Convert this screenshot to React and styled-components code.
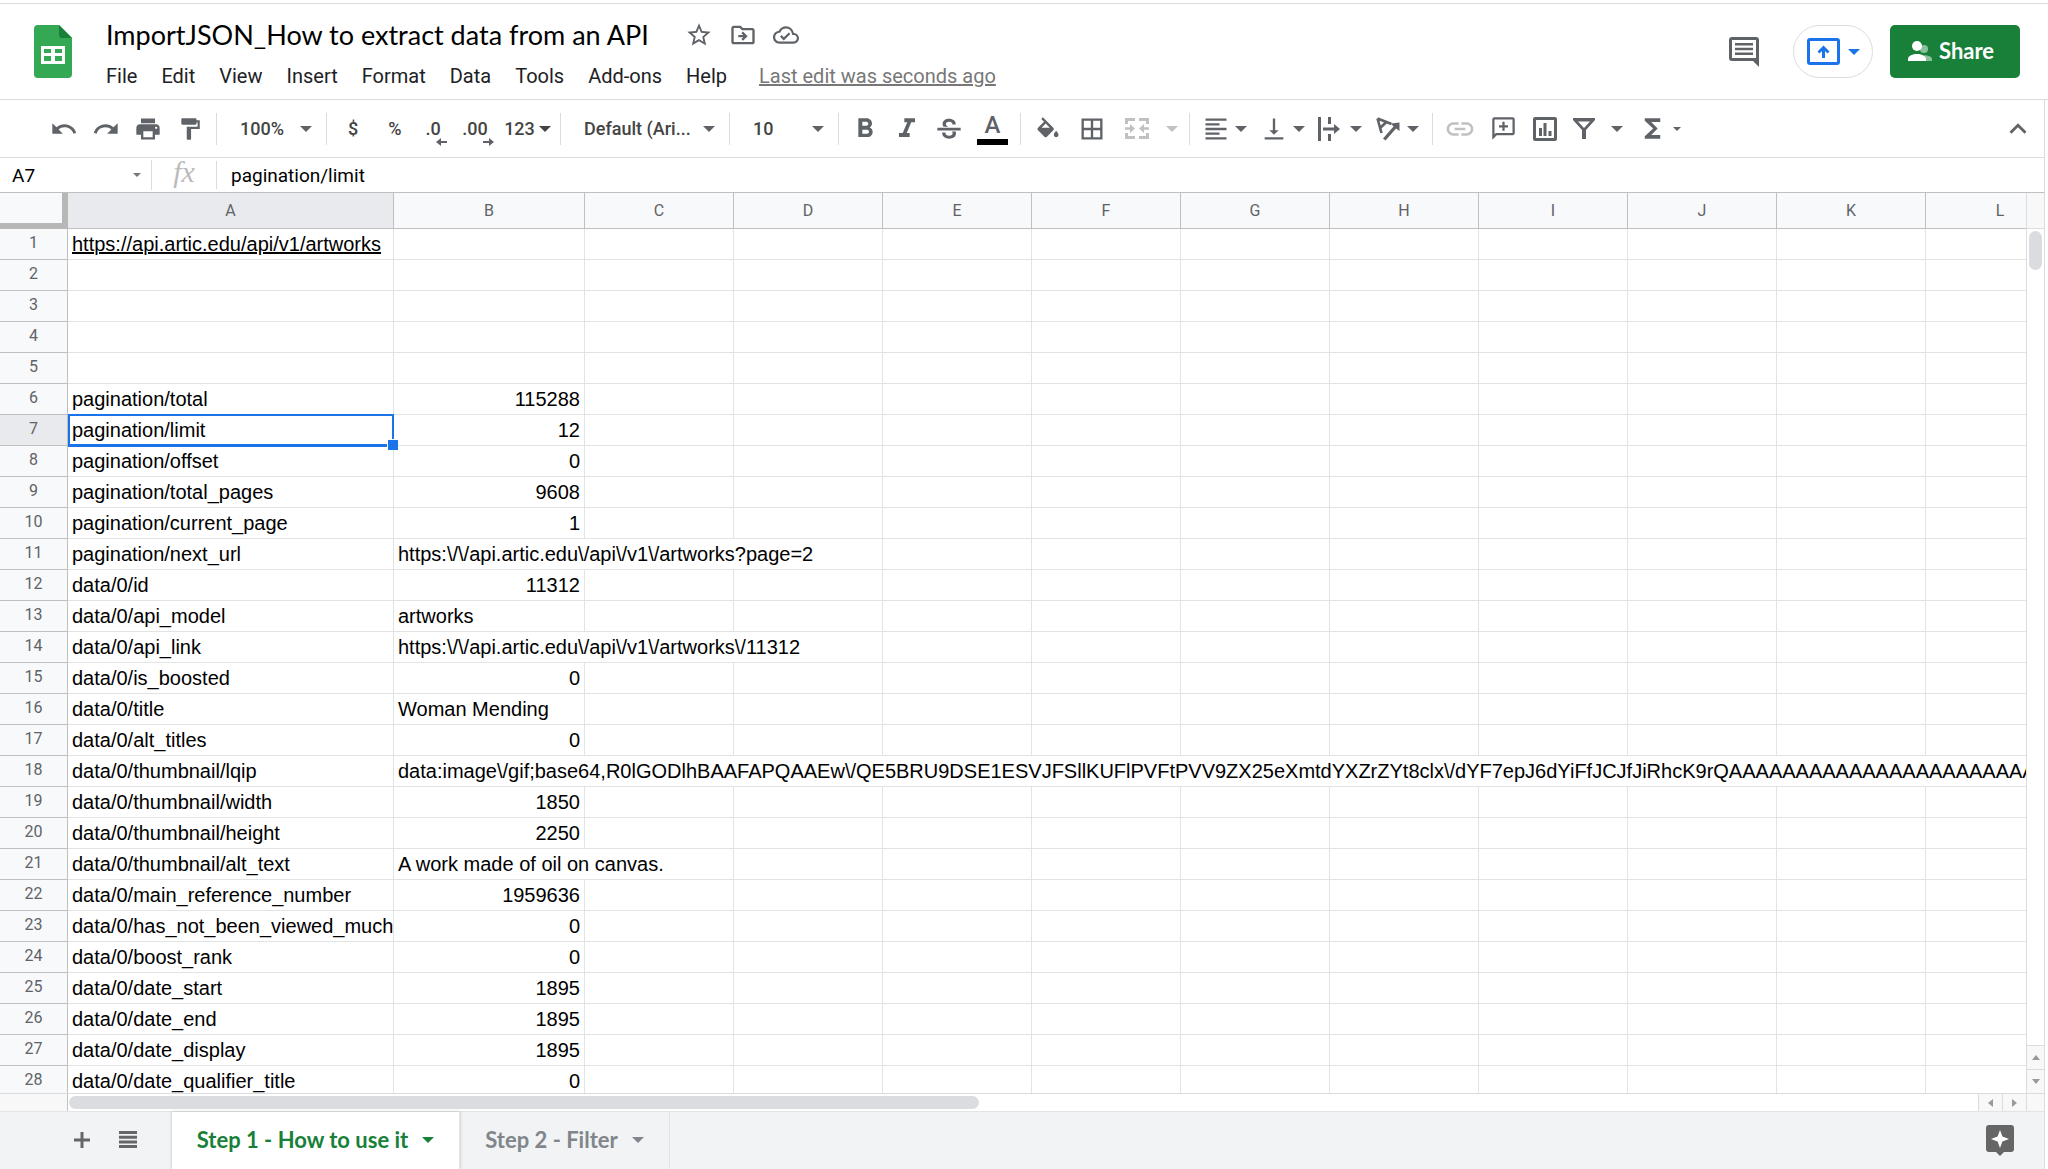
import React from 'react';
import styled, { createGlobalStyle, css } from 'styled-components';
import {
  MdUndo,
  MdRedo,
  MdPrint,
  MdFormatPaint,
  MdFormatBold,
  MdFormatItalic,
  MdBorderAll,
  MdFormatAlignLeft,
  MdVerticalAlignBottom,
  MdInsertLink,
  MdFunctions,
  MdStarBorder,
  MdOutlineDriveFileMove,
  MdOutlineCloudDone,
  MdKeyboardArrowUp,
} from 'react-icons/md';

const grey = '#5f6368';
const green = '#188038';
const blue = '#1a73e8';
const uiFont = "Roboto, 'Liberation Sans', sans-serif";

const GlobalStyle = createGlobalStyle`
  * {
    box-sizing: border-box;
  }
  body {
    margin: 0;
    background: #fff;
    font-family: ${uiFont};
    color: #202124;
  }
  button, input, select {
    font: inherit;
    color: inherit;
    margin: 0;
    padding: 0;
    border: 0;
    background: none;
  }
  svg {
    display: block;
    flex: none;
  }
`;

const Page = styled.div`
  display: flex;
  flex-direction: column;
  height: 100vh;
  padding-top: 3px;
  overflow: hidden;
`;

const Header = styled.header`
  display: flex;
  align-items: flex-start;
  height: 97px;
  padding: 21px 28px 0 34px;
  border-top: 1px solid #dadce0;
  border-bottom: 1px solid #dadce0;
  flex: none;
`;

const TitleBlock = styled.div`
  flex: 1;
  margin: -9px 0 0 34px;
`;

const TitleRow = styled.div`
  display: flex;
  align-items: center;
  height: 38px;
`;

const Title = styled.h1`
  margin: 0 36px 0 0;
  font-family: Lato, sans-serif;
  font-size: 27px;
  font-weight: 400;
  line-height: 38px;
  white-space: nowrap;
  color: #000;
`;

const TitleIcons = styled.div`
  display: flex;
  gap: 16px;
  color: ${grey};
`;

const PlainButton = styled.button`
  display: flex;
  align-items: center;
  justify-content: center;
  color: ${grey};
`;

const Menu = styled.nav`
  display: flex;
  align-items: center;
  gap: 24px;
  height: 44px;
  font-size: 20px;
  line-height: 24px;

  & > button {
    white-space: nowrap;
  }
`;

const LastEdit = styled.a`
  margin-left: 8px;
  color: #777;
  text-decoration: underline;
  white-space: nowrap;
`;

const Actions = styled.div`
  display: flex;
  align-items: center;
`;

const Present = styled.button`
  display: flex;
  align-items: center;
  justify-content: center;
  gap: 8px;
  width: 80px;
  height: 53px;
  margin: 0 17px 0 34px;
  border: 1px solid #dadce0;
  border-radius: 27px;
  color: ${blue};
`;

const Share = styled.button`
  display: flex;
  align-items: center;
  gap: 7px;
  width: 130px;
  height: 53px;
  padding: 0 0 2px 18px;
  border-radius: 5px;
  background: ${green};
  color: #fff;
  font-family: Lato, sans-serif;
  font-size: 22px;
  font-weight: 700;
`;

const Bar = styled.div`
  display: flex;
  align-items: center;
  height: 58px;
  margin-right: 3px;
  padding: 0 9px 0 43px;
  border-right: 1px solid #dadce0;
  border-bottom: 1px solid #dadce0;
  color: #444;
  font-size: 18px;
  font-weight: 500;
  flex: none;
`;

const Tool = styled.button`
  display: flex;
  align-items: center;
  justify-content: ${(p) => (p.$menu ? 'flex-start' : 'center')};
  gap: ${(p) => p.$gap || 7}px;
  width: ${(p) => p.$width || 42}px;
  height: 42px;
  padding-left: ${(p) => (p.$menu ? '7px' : 0)};
  color: ${(p) => (p.$off ? '#c0c1c3' : grey)};
`;

const TextTool = styled(Tool)`
  padding-right: ${(p) => (p.$decimals ? '8px' : 0)};
  color: #444;
  gap: 4px;
`;

const Divider = styled.span`
  width: 1px;
  height: 32px;
  margin: 0 5px;
  background: #dadce0;
`;

const Spacer = styled.span`
  flex: 1;
`;

const SelectWrap = styled.label`
  display: flex;
  align-items: center;
  width: ${(p) => p.$width}px;
  padding: 0 9px 0 18px;
  color: ${grey};

  select {
    flex: 1;
    min-width: 0;
    appearance: none;
    color: #444;
    text-overflow: ellipsis;
  }
`;

const Glyph = styled.span`
  position: relative;
  line-height: 28px;

  svg {
    position: absolute;
    right: -6px;
    bottom: -3px;
  }
`;

const TextColour = styled.span`
  width: 31px;
  border-bottom: 6px solid #000;
  font-size: 24px;
  font-weight: 500;
  line-height: 27px;
  text-align: center;
`;

const FormulaRow = styled.div`
  display: flex;
  align-items: center;
  height: 35px;
  margin-right: 3px;
  border-right: 1px solid #dadce0;
  border-bottom: 1px solid #c0c0c0;
  color: #000;
  font-size: 19px;
  flex: none;
`;

const NameBox = styled.label`
  display: flex;
  align-items: center;
  width: 152px;
  height: 30px;
  padding: 0 10px 0 12px;
  border-right: 1px solid #dadce0;
  color: #777;

  input {
    flex: 1;
    min-width: 0;
    color: #000;
  }
`;

const Fx = styled.span`
  width: 65px;
  height: 28px;
  border-right: 1px solid #dadce0;
  color: #bbb;
  font-family: 'Liberation Serif', serif;
  font-size: 30px;
  font-style: italic;
  line-height: 22px;
  text-align: center;
`;

const FormulaInput = styled.input`
  flex: 1;
  padding-left: 14px;
`;

const Body = styled.main`
  display: grid;
  grid-template-columns: minmax(0, 1fr) 18px;
  grid-template-rows: minmax(0, 1fr) 18px;
  flex: 1;
  min-height: 0;
  margin-right: 3px;
  border-right: 1px solid #dadce0;
`;

const Sheet = styled.div`
  overflow: hidden;
`;

const Grid = styled.table`
  width: 2075px;
  table-layout: fixed;
  border-collapse: separate;
  border-spacing: 0;
`;

const headCell = css`
  padding: 0;
  border-right: 1px solid #c0c0c0;
  border-bottom: 1px solid #c0c0c0;
  background: ${(p) => (p.$active ? '#e8eaed' : '#f8f9fa')};
  color: ${grey};
  font-size: 16px;
  font-weight: 400;
  text-align: center;
`;

const Corner = styled.td`
  height: 36px;
  padding: 0;
  border-right: 6px solid #b7b7b7;
  border-bottom: 6px solid #b7b7b7;
  background: #f8f9fa;
`;

const ColHead = styled.th`
  ${headCell}
  height: 36px;
`;

const RowHead = styled.th`
  ${headCell}
  height: 31px;
  padding-bottom: 2px;
  line-height: 28px;
`;

const Cell = styled.td`
  position: relative;
  height: 31px;
  padding: 0 4px 4px;
  border-right: 1px solid #e2e3e3;
  border-bottom: 1px solid #e2e3e3;
  color: #000;
  font-family: 'Liberation Sans', Arial, sans-serif;
  font-size: 20px;
  line-height: 22px;
  text-align: ${(p) => (p.$number ? 'right' : 'left')};
  vertical-align: bottom;
  white-space: nowrap;

  a {
    color: inherit;
  }
`;

const Selection = styled.span`
  position: absolute;
  inset: -1px -1px -2px 0;
  border: 2px solid ${blue};
  border-bottom-width: 3px;
  z-index: 1;

  &::after {
    content: '';
    position: absolute;
    right: -6px;
    bottom: -6px;
    width: 10px;
    height: 10px;
    border: solid #fff;
    border-width: 1px 0 0 1px;
    background: ${blue};
  }
`;

const VScroll = styled.div`
  display: flex;
  flex-direction: column;
  border-left: 1px solid #dadce0;
`;

const VTop = styled.span`
  height: 36px;
  border-bottom: 1px solid #dadce0;
  background: #f8f8f8;
`;

const VThumb = styled.span`
  width: 13px;
  height: 39px;
  margin: 2px;
  border-radius: 7px;
  background: #dadce0;
`;

const HScroll = styled.div`
  display: flex;
  border-top: 1px solid #dadce0;
`;

const HHead = styled.span`
  width: 68px;
  border-right: 1px solid #c0c0c0;
  background: #f8f8f8;
`;

const HTrack = styled.span`
  display: flex;
  flex: 1;
  padding: 2px 1px;
`;

const HThumb = styled.span`
  width: 47.7%;
  height: 13px;
  border-radius: 7px;
  background: #dadce0;
`;

const ScrollButton = styled.button`
  display: flex;
  align-items: center;
  justify-content: center;
  width: ${(p) => (p.$side ? '24px' : '17px')};
  height: ${(p) => (p.$side ? '17px' : '24px')};
  border: solid #dadce0;
  border-width: ${(p) => (p.$side ? '0 0 0 1px' : '1px 0 0')};
  background: #f8f8f8;
  color: #999;
`;

const ScrollCorner = styled.span`
  border: solid #dadce0;
  border-width: 1px 0 0 1px;
  background: #f8f8f8;
`;

const Footer = styled.footer`
  display: flex;
  align-items: stretch;
  height: 58px;
  margin-right: 3px;
  padding: 0 30px 0 68px;
  border-top: 1px solid #e3e4e6;
  border-right: 1px solid #dadce0;
  background: #f1f3f4;
  flex: none;
`;

const SheetTools = styled.div`
  display: flex;
  align-items: center;
  gap: 23px;
  width: 104px;
  padding-bottom: 2px;
`;

const Tab = styled.button`
  display: flex;
  align-items: center;
  justify-content: center;
  gap: 14px;
  width: ${(p) => (p.$active ? 288 : 210)}px;
  padding-bottom: 2px;
  border-right: 1px solid #e3e4e6;
  background: ${(p) => (p.$active ? '#fff' : 'none')};
  box-shadow: ${(p) => (p.$active ? '0 0 3px #bbb' : 'none')};
  color: ${(p) => (p.$active ? green : '#80868b')};
  font-family: Lato, sans-serif;
  font-size: 22px;
  font-weight: 700;
  white-space: nowrap;
`;

const Caret = ({ size = 12 }) => (
  <svg width={size} height={size} viewBox="0 0 12 12" fill="currentColor">
    <path d="M0 3h12L6 9z" />
  </svg>
);

const Icon = ({ size = 28, height, box = '0 0 24 24', children }) => (
  <svg width={size} height={height || size} viewBox={box} fill="currentColor">
    {children}
  </svg>
);

const SheetsLogo = () => (
  <svg width="38" height="53" viewBox="0 0 38 53">
    <path d="M4 0h21l13 13v36a4 4 0 0 1-4 4H4a4 4 0 0 1-4-4V4a4 4 0 0 1 4-4z" fill="#34a853" />
    <path d="M25 0l13 13H28a3 3 0 0 1-3-3z" fill={green} />
    <path d="M7 21h24v18H7zM10 24v4h7v-4zm11 0v4h7v-4zM10 31v5h7v-5zm11 0v5h7v-5z" fill="#fff" fillRule="evenodd" />
  </svg>
);

const StrikeIcon = () => (
  <Icon>
    <path d="M2 11h20v2.200H2zM12.100 3.300c-3.300 0-5.600 1.700-5.600 4.400 0 .9.300 1.700.8 2.300h4.100c-1.300-.5-2.100-1.100-2.100-2.200 0-1.200 1-2.100 2.800-2.100 1.900 0 2.900.9 2.900 2.500h2.800c0-3-2.200-4.900-5.700-4.900zM14.500 14.200c.4.400.6.900.6 1.500 0 1.300-1 2.100-2.900 2.100-2.100 0-3.300-.9-3.300-2.800H6.100c0 3.500 2.600 5.300 6.100 5.300 3.600 0 5.800-1.800 5.800-4.600 0-.6-.1-1.100-.3-1.500z" />
  </Icon>
);

const FillIcon = () => (
  <Icon box="0 -2 24 24">
    <path d="M16.560 8.940L7.620 0 6.210 1.410l2.380 2.380-5.150 5.150c-.59.59-.59 1.540 0 2.120l5.500 5.500c.29.29.68.44 1.060.44s.77-.15 1.060-.44l5.500-5.500c.59-.58.59-1.530 0-2.120zM6.500 9L10 5.210 13.500 9zM19 11.500s-2 2.170-2 3.500c0 1.100.9 2 2 2s2-.9 2-2c0-1.330-2-3.500-2-3.500z" />
  </Icon>
);

const MergeIcon = () => (
  <Icon size={24} height={21} box="0 0 24 21">
    <path d="M0 0h10v3H3v3H0zM14 0h10v6h-3V3h-7zM0 15h3v3h7v3H0zM21 15h3v6H14v-3h7zM0 9.200h5V6l5 4.500L5 15v-3.200H0zM24 9.200h-5V6l-5 4.500 5 4.500v-3.200h5z" />
  </Icon>
);

const WrapIcon = () => (
  <Icon size={22} height={24} box="0 0 22 24">
    <path d="M0 0h3v24H0zM10 0h3v7h-3zM10 17h3v7h-3zM5 10.500h11V7l6 5-6 5v-3.500H5z" />
  </Icon>
);

const RotateIcon = () => (
  <Icon size={24} height={24} box="0 0 24 24">
    <path d="M1.500 1.500L15.500 7M1.500 1.500L5.500 16M10.500 5L4 11" fill="none" stroke="currentColor" strokeWidth="2.600" />
    <path d="M7 21.500L17.500 9.500 15 6.500l8.500-1V14L20 11.500 9.500 23.500z" />
  </Icon>
);

const AddCommentIcon = () => (
  <Icon size={27}>
    <path d="M20 2H4a2 2 0 0 0-2 2v18l4-4h14a2 2 0 0 0 2-2V4a2 2 0 0 0-2-2zm0 14H5.200L4 17.200V4h16zM11 14h2v-3h3V9h-3V6h-2v3H8v2h3z" />
  </Icon>
);

const ChartIcon = () => (
  <Icon size={24}>
    <path fillRule="evenodd" d="M2 0h20a2 2 0 0 1 2 2v20a2 2 0 0 1-2 2H2a2 2 0 0 1-2-2V2a2 2 0 0 1 2-2zm1 3v18h18V3zM6 11h3v8H6zM10.500 6h3v13h-3zM15.500 14h3v5h-3z" />
  </Icon>
);

const FilterIcon = () => (
  <Icon size={22} height={21} box="0 0 22 21">
    <path fillRule="evenodd" d="M0 0h22v2l-9 10v9H9v-9L0 2zM5 3.500l6 6.500 6-6.500z" />
  </Icon>
);

const CommentsIcon = () => (
  <Icon size={30} height={30} box="0 0 30 30">
    <path fillRule="evenodd" d="M3 0h24a3 3 0 0 1 3 3v27l-6-6H3a3 3 0 0 1-3-3V3a3 3 0 0 1 3-3zm0 3v18h24V3zM6 6h18v2.500H6zm0 4.700h18v2.500H6zm0 4.700h18V18H6z" />
  </Icon>
);

const PresentIcon = () => (
  <Icon size={33} height={27} box="0 0 33 27">
    <path fillRule="evenodd" d="M3 0h27a3 3 0 0 1 3 3v21a3 3 0 0 1-3 3H3a3 3 0 0 1-3-3V3a3 3 0 0 1 3-3zm0 3v21h27V3zM15 20v-7l-2.500 2.500-2-2L16.500 7.500l6 6-2 2L18 13v7z" />
  </Icon>
);

const PeopleIcon = () => (
  <Icon size={24} height={20} box="0 0 24 20">
    <circle cx="16" cy="8" r="4" opacity=".5" />
    <path d="M16 14c4 .3 8 1.500 8 4v2h-6z" opacity=".5" />
    <circle cx="9" cy="5" r="5" />
    <path d="M0 20v-2c0-3.500 5-5 9-5s9 1.500 9 5v2z" />
  </Icon>
);

const SmallArrow = ({ right }) => (
  <svg width="11" height="8" viewBox="0 0 11 8" fill={grey}>
    <path d={right ? 'M0 3h6V0l5 4-5 4V5H0z' : 'M11 3H5V0L0 4l5 4V5h6z'} />
  </svg>
);

const ExploreIcon = () => (
  <Icon size={28} height={31} box="0 0 28 31">
    <path fill="#666" d="M3 0h22a3 3 0 0 1 3 3v21a3 3 0 0 1-3 3h-7l-4 4-4-4H3a3 3 0 0 1-3-3V3a3 3 0 0 1 3-3z" />
    <path fill="#fff" d="M14 5l2.400 6.600L23 14l-6.600 2.400L14 23l-2.400-6.600L5 14l6.600-2.400z" />
  </Icon>
);

const menus = ['File', 'Edit', 'View', 'Insert', 'Format', 'Data', 'Tools', 'Add-ons', 'Help'];

const columns = ['A', 'B', 'C', 'D', 'E', 'F', 'G', 'H', 'I', 'J', 'K', 'L'];

// [key, value, columns the value runs over]
const rows = [
  ['https://api.artic.edu/api/v1/artworks'],
  [],
  [],
  [],
  [],
  ['pagination/total', 115288],
  ['pagination/limit', 12],
  ['pagination/offset', 0],
  ['pagination/total_pages', 9608],
  ['pagination/current_page', 1],
  ['pagination/next_url', 'https:\\/\\/api.artic.edu\\/api\\/v1\\/artworks?page=2', 3],
  ['data/0/id', 11312],
  ['data/0/api_model', 'artworks'],
  ['data/0/api_link', 'https:\\/\\/api.artic.edu\\/api\\/v1\\/artworks\\/11312', 3],
  ['data/0/is_boosted', 0],
  ['data/0/title', 'Woman Mending'],
  ['data/0/alt_titles', 0],
  [
    'data/0/thumbnail/lqip',
    `data:image\\/gif;base64,R0lGODlhBAAFAPQAAEw\\/QE5BRU9DSE1ESVJFSllKUFlPVFtPVV9ZX25eXmtdYXZrZYt8clx\\/dYF7epJ6dYiFfJCJfJiRhcK9rQ${'A'.repeat(24)}`,
    11,
  ],
  ['data/0/thumbnail/width', 1850],
  ['data/0/thumbnail/height', 2250],
  ['data/0/thumbnail/alt_text', 'A work made of oil on canvas.', 2],
  ['data/0/main_reference_number', 1959636],
  ['data/0/has_not_been_viewed_much', 0],
  ['data/0/boost_rank', 0],
  ['data/0/date_start', 1895],
  ['data/0/date_end', 1895],
  ['data/0/date_display', 1895],
  ['data/0/date_qualifier_title', 0],
];

const selectedRow = 7;

const Row = ({ number, data }) => {
  const [key = '', value = '', span = 1] = data;
  const selected = number === selectedRow;
  return (
    <tr>
      <RowHead scope="row" $active={selected}>{number}</RowHead>
      <Cell>
        {key.startsWith('https') ? <a href="#artworks">{key}</a> : key}
        {selected && <Selection />}
      </Cell>
      <Cell colSpan={span} $number={typeof value === 'number'}>{value}</Cell>
      {columns.slice(1 + span).map((c) => (
        <Cell key={c} />
      ))}
    </tr>
  );
};

const Toolbar = () => (
  <Bar role="toolbar" aria-label="Main">
    <Tool aria-label="Undo"><MdUndo size={28} /></Tool>
    <Tool aria-label="Redo"><MdRedo size={28} /></Tool>
    <Tool aria-label="Print"><MdPrint size={28} /></Tool>
    <Tool aria-label="Paint format"><MdFormatPaint size={26} /></Tool>
    <Divider />
    <SelectWrap $width={99}>
      <select aria-label="Zoom"><option>100%</option></select>
      <Caret />
    </SelectWrap>
    <Divider />
    <TextTool>$</TextTool>
    <TextTool>%</TextTool>
    <TextTool $decimals aria-label="Decrease decimal places">
      <Glyph>.0<SmallArrow /></Glyph>
    </TextTool>
    <TextTool $decimals aria-label="Increase decimal places">
      <Glyph>.00<SmallArrow right /></Glyph>
    </TextTool>
    <TextTool $width={55}>123<Caret /></TextTool>
    <Divider />
    <SelectWrap $width={158}>
      <select aria-label="Font"><option>Default (Ari...</option></select>
      <Caret />
    </SelectWrap>
    <Divider />
    <SelectWrap $width={98}>
      <select aria-label="Font size"><option>10</option></select>
      <Caret />
    </SelectWrap>
    <Divider />
    <Tool aria-label="Bold"><MdFormatBold size={32} /></Tool>
    <Tool aria-label="Italic"><MdFormatItalic size={32} /></Tool>
    <Tool aria-label="Strikethrough"><StrikeIcon /></Tool>
    <Tool $width={45} aria-label="Text color"><TextColour>A</TextColour></Tool>
    <Divider />
    <Tool $width={44} aria-label="Fill color"><FillIcon /></Tool>
    <Tool $width={44} aria-label="Borders"><MdBorderAll size={28} /></Tool>
    <Tool $width={46} $off aria-label="Merge cells"><MergeIcon /></Tool>
    <Tool $width={24} $off aria-label="Merge type"><Caret /></Tool>
    <Divider />
    <Tool $width={58} $menu $gap={5} aria-label="Horizontal align">
      <MdFormatAlignLeft size={28} />
      <Caret />
    </Tool>
    <Tool $width={58} $menu $gap={5} aria-label="Vertical align">
      <MdVerticalAlignBottom size={28} />
      <Caret />
    </Tool>
    <Tool $width={58} $menu $gap={10} aria-label="Text wrapping">
      <WrapIcon />
      <Caret />
    </Tool>
    <Tool $width={58} $menu aria-label="Text rotation">
      <RotateIcon />
      <Caret />
    </Tool>
    <Divider />
    <Tool $width={44} $off aria-label="Insert link"><MdInsertLink size={32} /></Tool>
    <Tool aria-label="Insert comment"><AddCommentIcon /></Tool>
    <Tool aria-label="Insert chart"><ChartIcon /></Tool>
    <Tool $width={64} $menu $gap={16} aria-label="Filter">
      <FilterIcon />
      <Caret />
    </Tool>
    <Tool $width={58} $menu $gap={5} aria-label="Functions">
      <MdFunctions size={31} />
      <Caret size={8} />
    </Tool>
    <Spacer />
    <PlainButton aria-label="Hide the menus"><MdKeyboardArrowUp size={34} /></PlainButton>
  </Bar>
);

const App = () => (
  <Page>
    <GlobalStyle />
    <Header>
      <SheetsLogo />
      <TitleBlock>
        <TitleRow>
          <Title>ImportJSON_How to extract data from an API</Title>
          <TitleIcons>
            <PlainButton aria-label="Star"><MdStarBorder size={28} /></PlainButton>
            <PlainButton aria-label="Move"><MdOutlineDriveFileMove size={28} /></PlainButton>
            <PlainButton aria-label="Document status"><MdOutlineCloudDone size={26} /></PlainButton>
          </TitleIcons>
        </TitleRow>
        <Menu>
          {menus.map((m) => (
            <button key={m}>{m}</button>
          ))}
          <LastEdit href="#history">Last edit was seconds ago</LastEdit>
        </Menu>
      </TitleBlock>
      <Actions>
        <PlainButton aria-label="Open comment history"><CommentsIcon /></PlainButton>
        <Present aria-label="Present to a meeting">
          <PresentIcon />
          <Caret />
        </Present>
        <Share><PeopleIcon />Share</Share>
      </Actions>
    </Header>
    <Toolbar />
    <FormulaRow>
      <NameBox>
        <input aria-label="Name box" defaultValue="A7" />
        <Caret size={8} />
      </NameBox>
      <Fx>fx</Fx>
      <FormulaInput aria-label="Formula" defaultValue="pagination/limit" />
    </FormulaRow>
    <Body>
      <Sheet>
        <Grid>
          <colgroup>
            <col style={{ width: 68 }} />
            {columns.map((c) => (
              <col key={c} style={{ width: { A: 326, B: 191 }[c] || 149 }} />
            ))}
          </colgroup>
          <thead>
            <tr>
              <Corner />
              {columns.map((c) => (
                <ColHead key={c} scope="col" $active={c === 'A'}>{c}</ColHead>
              ))}
            </tr>
          </thead>
          <tbody>
            {rows.map((data, i) => (
              <Row key={i} number={i + 1} data={data} />
            ))}
          </tbody>
        </Grid>
      </Sheet>
      <VScroll>
        <VTop />
        <VThumb />
        <Spacer />
        <ScrollButton aria-label="Scroll up">
          <svg width="8" height="5" viewBox="0 0 8 5" fill="currentColor"><path d="M0 5h8L4 0z" /></svg>
        </ScrollButton>
        <ScrollButton aria-label="Scroll down">
          <svg width="8" height="5" viewBox="0 0 8 5" fill="currentColor"><path d="M0 0h8L4 5z" /></svg>
        </ScrollButton>
      </VScroll>
      <HScroll>
        <HHead />
        <HTrack><HThumb /></HTrack>
        <ScrollButton $side aria-label="Scroll left">
          <svg width="5" height="8" viewBox="0 0 5 8" fill="currentColor"><path d="M5 0v8L0 4z" /></svg>
        </ScrollButton>
        <ScrollButton $side aria-label="Scroll right">
          <svg width="5" height="8" viewBox="0 0 5 8" fill="currentColor"><path d="M0 0v8l5-4z" /></svg>
        </ScrollButton>
      </HScroll>
      <ScrollCorner />
    </Body>
    <Footer>
      <SheetTools>
        <PlainButton aria-label="Add sheet">
          <Icon size={28} box="0 0 28 28"><path fill="#666" d="M12.500 6h3v6.500H22v3h-6.500V22h-3v-6.500H6v-3h6.500z" /></Icon>
        </PlainButton>
        <PlainButton aria-label="All sheets">
          <Icon size={18} height={17} box="0 0 18 17"><path fill="#666" d="M0 0h18v3H0zm0 4.700h18v3H0zm0 4.700h18v3H0zm0 4.600h18v3H0z" /></Icon>
        </PlainButton>
      </SheetTools>
      <Tab $active>Step 1 - How to use it<Caret /></Tab>
      <Tab>Step 2 - Filter<Caret /></Tab>
      <Spacer />
      <PlainButton aria-label="Explore"><ExploreIcon /></PlainButton>
    </Footer>
  </Page>
);

export default App;
